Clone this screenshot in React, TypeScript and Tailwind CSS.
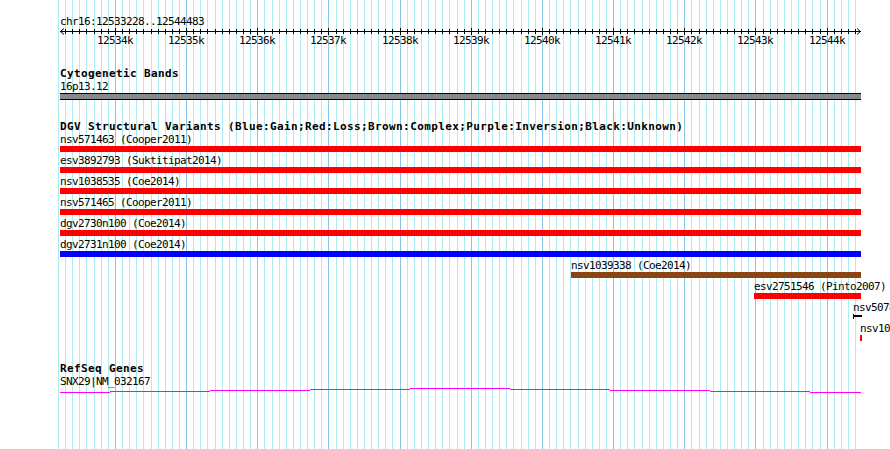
import React from 'react'

const START = 12533228
const END = 12544483
const X0 = 60
const X1 = 861

const sx = (pos: number) => Math.round(X0 + ((pos - START) * (X1 - X0)) / (END - START))

const gridPositions: number[] = []
for (let p = 12533200; p <= 12544400; p += 100) gridPositions.push(p)

interface Feature {
  label: string
  left: number
  right: number
  color: string
  kind?: 'bar' | 'tick'
}

const variants: Feature[] = [
  { label: 'nsv571463 (Cooper2011)', left: 60, right: 861, color: 'bg-[#ff0000]' },
  { label: 'esv3892793 (Suktitipat2014)', left: 60, right: 861, color: 'bg-[#ff0000]' },
  { label: 'nsv1038535 (Coe2014)', left: 60, right: 861, color: 'bg-[#ff0000]' },
  { label: 'nsv571465 (Cooper2011)', left: 60, right: 861, color: 'bg-[#ff0000]' },
  { label: 'dgv2730n100 (Coe2014)', left: 60, right: 861, color: 'bg-[#ff0000]' },
  { label: 'dgv2731n100 (Coe2014)', left: 60, right: 861, color: 'bg-[#0000ff]' },
  { label: 'nsv1039338 (Coe2014)', left: 571, right: 861, color: 'bg-[#8b4513]' },
  { label: 'esv2751546 (Pinto2007)', left: 754, right: 861, color: 'bg-[#ff0000]' },
  { label: 'nsv5078', left: 853, right: 862, color: 'bg-black', kind: 'tick' },
  { label: 'nsv10', left: 860, right: 862, color: 'bg-[#ff0000]' },
]

const mono = "font-['DejaVu_Sans_Mono',monospace]"
const small = `${mono} text-[11px] leading-[13px] tracking-[-0.62px] text-black whitespace-nowrap`
const bold = `${mono} font-bold text-[11px] leading-[12px] tracking-[0.38px] text-black whitespace-nowrap`

const Grid = () => (
  <svg className="absolute inset-0" width={890} height={449}>
    {gridPositions.map((p) => {
      const x = sx(p) + 0.5
      const major = p % 1000 === 0
      return <line key={p} x1={x} x2={x} y1={0} y2={449} stroke={major ? '#86c6ea' : '#acecf0'} strokeWidth={1} />
    })}
  </svg>
)

const Ruler = () => {
  const ticks = gridPositions.filter((p) => p > START && p < END)
  return (
    <svg width={890} height={20} className="block">
      <line x1={X0} x2={X1} y1={3.5} y2={3.5} stroke="black" />
      <polyline points={`${X0 + 4},0.5 ${X0 + 0.5},3.5 ${X0 + 4},6.5`} fill="none" stroke="black" />
      <polyline points={`${X1 - 4},0.5 ${X1 - 0.5},3.5 ${X1 - 4},6.5`} fill="none" stroke="black" />
      {ticks.map((p) => {
        const x = sx(p) + 0.5
        const major = p % 1000 === 0
        return <line key={p} x1={x} x2={x} y1={major ? 0 : 1} y2={major ? 7 : 6} stroke="black" />
      })}
      {ticks
        .filter((p) => p % 1000 === 0)
        .map((p) => (
          <text
            key={p}
            x={sx(p)}
            y={16}
            textAnchor="middle"
            fontFamily="DejaVu Sans Mono, monospace"
            fontSize={11}
            letterSpacing={-0.62}
            fill="black"
          >
            {p / 1000}k
          </text>
        ))}
    </svg>
  )
}

const VariantRow = ({ f }: { f: Feature }) => (
  <div className="h-[21px]">
    <div className={small} style={{ paddingLeft: f.left }}>
      {f.label}
    </div>
    {f.kind === 'tick' ? (
      <svg width={890} height={6} className="block">
        <line x1={f.left + 0.5} x2={f.left + 0.5} y1={0} y2={5} stroke="black" />
        <rect x={f.left} y={1} width={f.right - f.left} height={2} fill="black" />
      </svg>
    ) : (
      <div className={`h-[6px] ${f.color}`} style={{ marginLeft: f.left, width: f.right - f.left }} />
    )}
  </div>
)

// stepped line of the gene model
const geneSteps = [
  [60, 110, 4],
  [110, 210, 3],
  [210, 310, 2],
  [310, 410, 1],
  [410, 510, 0],
  [510, 610, 1],
  [610, 710, 2],
  [710, 810, 3],
  [810, 861, 4],
]

export default function App() {
  return (
    <div className="relative w-[890px] h-[449px] overflow-hidden bg-white">
      <Grid />
      <div className="relative pt-[15px]">
        <div className={`${small} pl-[60px]`}>chr16:12533228..12544483</div>
        <Ruler />

        <div className={`${bold} pl-[60px] mt-[20px]`}>Cytogenetic Bands</div>
        <div className={`${small} pl-[60px]`}>16p13.12</div>
        <div className="ml-[60px] w-[801px] h-[7px] mb-[2px] bg-[#888888] border-y border-black" />

        <div className={`${bold} pl-[60px] mt-[21px]`}>
          DGV Structural Variants (Blue:Gain;Red:Loss;Brown:Complex;Purple:Inversion;Black:Unknown)
        </div>
        <div className="flex flex-col">
          {variants.map((f) => (
            <VariantRow key={f.label} f={f} />
          ))}
        </div>

        <div className={`${bold} pl-[60px] mt-[20px]`}>RefSeq Genes</div>
        <div className={`${small} pl-[60px]`}>SNX29|NM_032167</div>
        <svg width={890} height={6} className="block">
          {geneSteps.map(([a, b, y]) => (
            <line key={a} x1={a} x2={b} y1={y + 0.5} y2={y + 0.5} stroke="#ff00ff" />
          ))}
        </svg>
      </div>
    </div>
  )
}
